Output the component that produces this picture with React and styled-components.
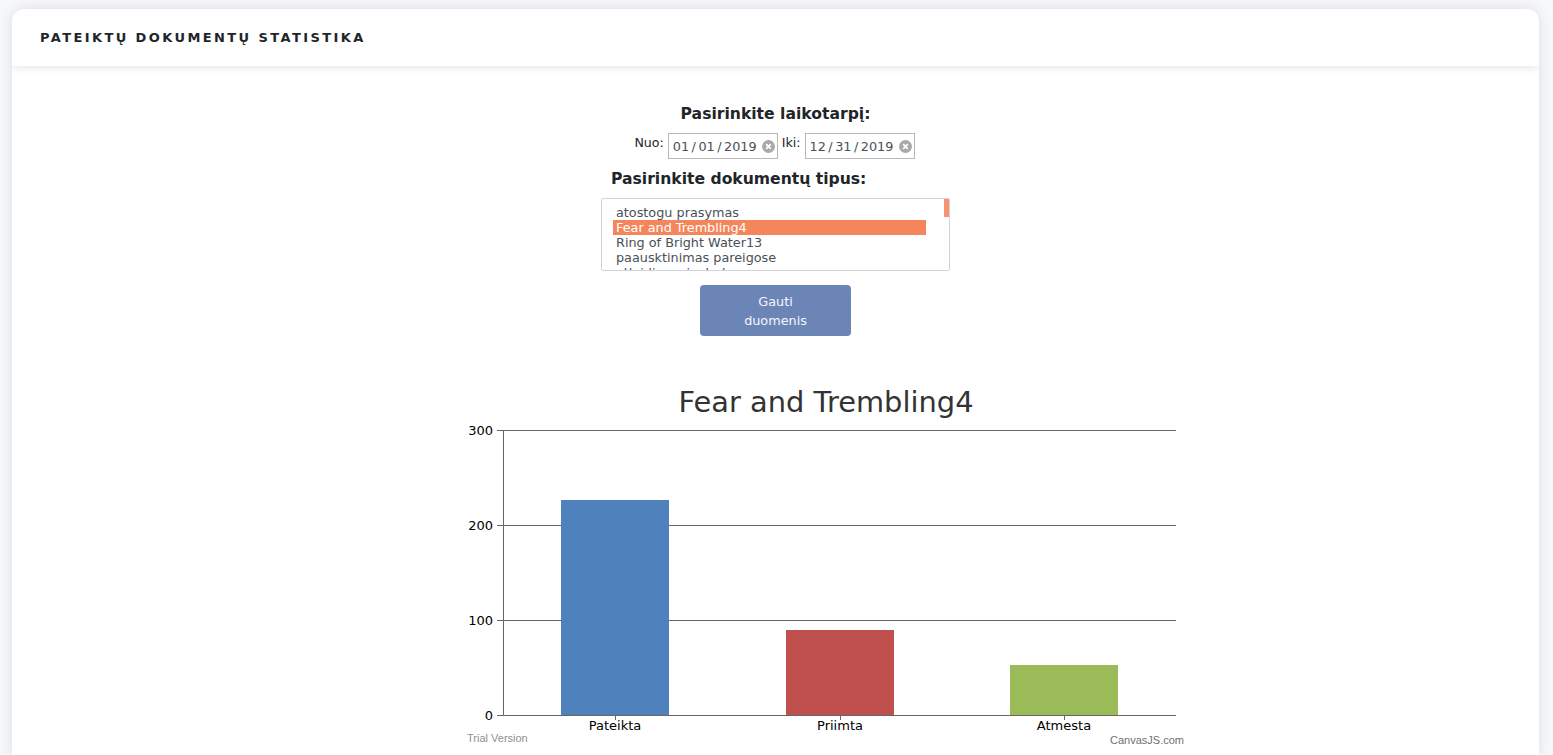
import React from 'react';
import styled, { createGlobalStyle } from 'styled-components';

const GlobalStyle = createGlobalStyle`
  html, body {
    margin: 0;
    height: 755px;
    overflow: hidden;
    background: #f7f8fa;
    font-family: "DejaVu Sans", sans-serif;
  }
`;

const Page = styled.div`
  padding: 9px 14px 0 12px;
`;

const Card = styled.div`
  background: #fff;
  border-radius: 12px 12px 0 0;
  box-shadow: 0 0 13px rgba(60, 60, 80, 0.14);
  height: 746px;
  overflow: hidden;
`;

const CardHeader = styled.div`
  height: 57px;
  padding-left: 28px;
  display: flex;
  align-items: center;
  border-radius: 12px 12px 0 0;
  box-shadow: 0 2px 8px rgba(0, 0, 0, 0.1);
`;

const CardTitle = styled.h5`
  margin: 0;
  font-size: 13px;
  font-weight: 700;
  letter-spacing: 2.4px;
  color: #212529;
`;

const Form = styled.div`
  display: flex;
  flex-direction: column;
  align-items: center;
  padding-top: 38px;
`;

const Heading = styled.h3`
  margin: 0;
  font-size: 15.6px;
  line-height: 20px;
  font-weight: 700;
  color: #212529;
`;

const DateRow = styled.div`
  display: flex;
  gap: 4px;
  margin: 9px 2px 0 0;
`;

const DateLabel = styled.label`
  padding-top: 1px;
  font-size: 12.6px;
  line-height: 18px;
  color: #212529;
`;

const DateInput = styled.div`
  box-sizing: border-box;
  width: 110px;
  height: 26px;
  border: 1px solid #b8b8b8;
  padding: 0 2px 0 4px;
  display: flex;
  align-items: center;
  justify-content: space-between;
  font-size: 12.8px;
  color: #495057;
`;

const DateSep = styled.span`
  margin: 0 2.5px;
`;

const ClearDot = styled.svg`
  width: 13px;
  height: 13px;
  flex: none;
`;

const TypeHeading = styled(Heading)`
  align-self: flex-start;
  margin: 10px 0 0 599px;
`;

const ListBox = styled.div`
  box-sizing: border-box;
  position: relative;
  width: 349px;
  height: 73px;
  margin-top: 9px;
  padding: 6px 0 0 11px;
  border: 1px solid #ced4da;
  border-radius: 2px;
  overflow: hidden;
`;

const ListOption = styled.div`
  width: 310px;
  height: 15px;
  padding-left: 3px;
  font-size: 12.8px;
  line-height: 15px;
  white-space: nowrap;
  color: ${(p) => (p.$selected ? '#fff' : '#495057')};
  background: ${(p) => (p.$selected ? '#f5865c' : 'transparent')};
`;

const ScrollThumb = styled.div`
  position: absolute;
  top: 0;
  right: 0;
  width: 5px;
  height: 18px;
  background: #f5865c;
  opacity: 0.9;
`;

const SubmitButton = styled.button`
  width: 151px;
  height: 51px;
  margin-top: 14px;
  padding: 0 30px;
  border: none;
  border-radius: 4px;
  background: #6c85b7;
  color: #f4f6fa;
  font-family: inherit;
  font-size: 12.8px;
  line-height: 19px;
`;

const ChartWrap = styled.div`
  width: 720px;
  margin: 49px 0 0 454px;
`;

const Chart = styled.svg`
  display: block;
  overflow: visible;
`;

const options = ['atostogu prasymas', 'Fear and Trembling4', 'Ring of Bright Water13', 'paausktinimas pareigose', 'atleidimas is darbo'];

const grid = [
  { label: '300', y: 430.5 },
  { label: '200', y: 525.5 },
  { label: '100', y: 620.5 },
  { label: '0', y: 715.5 },
];

const bars = [
  { label: 'Pateikta', x: 561, w: 108, top: 500, color: '#4f81bc', cx: 615 },
  { label: 'Priimta', x: 786, w: 108, top: 630, color: '#c0504e', cx: 840 },
  { label: 'Atmesta', x: 1010, w: 108, top: 665, color: '#9bbb58', cx: 1064 },
];

const ClearIcon = () => (
  <ClearDot viewBox="0 0 13 13">
    <circle cx="6.5" cy="6.5" r="6.5" fill="#a9a9a9" />
    <path d="M4.2 4.2l4.6 4.6M8.8 4.2l-4.6 4.6" stroke="#fff" strokeWidth="1.7" />
  </ClearDot>
);

const DateField = ({ parts }) => (
  <DateInput>
    <span>{parts[0]}<DateSep>/</DateSep>{parts[1]}<DateSep>/</DateSep>{parts[2]}</span>
    <ClearIcon />
  </DateInput>
);

// chart coordinates are page coordinates shifted by the viewBox origin
const BarChart = () => (
  <Chart width="720" height="370" viewBox="466 385 720 370">
    <text x="826" y="412" textAnchor="middle" fontSize="28.9" fill="#333" fontFamily="DejaVu Sans">Fear and Trembling4</text>
    {grid.map((g) => (
      <g key={g.label}>
        <line x1="497" x2="1176" y1={g.y} y2={g.y} stroke="#666" />
        <text x="493" y={g.y + 4} textAnchor="end" fontSize="13" fill="#000" fontFamily="DejaVu Sans">{g.label}</text>
      </g>
    ))}
    <line x1="503.5" x2="503.5" y1="430" y2="716" stroke="#666" />
    {bars.map((b) => (
      <g key={b.label}>
        <rect x={b.x} y={b.top} width={b.w} height={715 - b.top} fill={b.color} />
        <line x1={b.cx + 0.5} x2={b.cx + 0.5} y1="715" y2="720" stroke="#666" />
        <text x={b.cx} y="730" textAnchor="middle" fontSize="13" fill="#000" fontFamily="DejaVu Sans">{b.label}</text>
      </g>
    ))}
    <text x="467" y="742" fontSize="11" fill="#8f8f8f" fontFamily="Liberation Sans">Trial Version</text>
    <text x="1184" y="744" textAnchor="end" fontSize="11" fill="#6f6f6f" fontFamily="Liberation Sans">CanvasJS.com</text>
  </Chart>
);

export default function App() {
  return (
    <>
      <GlobalStyle />
      <Page>
        <Card>
          <CardHeader>
            <CardTitle>PATEIKTŲ DOKUMENTŲ STATISTIKA</CardTitle>
          </CardHeader>
          <Form>
            <Heading>Pasirinkite laikotarpį:</Heading>
            <DateRow>
              <DateLabel>Nuo:</DateLabel>
              <DateField parts={['01', '01', '2019']} />
              <DateLabel>Iki:</DateLabel>
              <DateField parts={['12', '31', '2019']} />
            </DateRow>
            <TypeHeading>Pasirinkite dokumentų tipus:</TypeHeading>
            <ListBox>
              {options.map((o, i) => (
                <ListOption key={o} $selected={i === 1}>{o}</ListOption>
              ))}
              <ScrollThumb />
            </ListBox>
            <SubmitButton>Gauti duomenis</SubmitButton>
          </Form>
          <ChartWrap>
            <BarChart />
          </ChartWrap>
        </Card>
      </Page>
    </>
  );
}
